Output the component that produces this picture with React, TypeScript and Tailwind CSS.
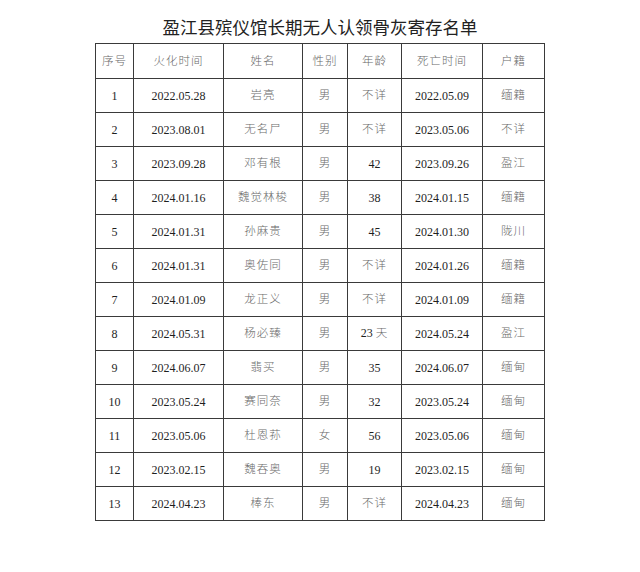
import React from 'react'

const COLUMNS = [
  { label: '序号', width: 'w-[38px]' },
  { label: '火化时间', width: 'w-[90px]' },
  { label: '姓名', width: 'w-[79px]' },
  { label: '性别', width: 'w-[45px]' },
  { label: '年龄', width: 'w-[54px]' },
  { label: '死亡时间', width: 'w-[81px]' },
  { label: '户籍', width: 'w-[62px]' },
]

const ROWS: string[][] = [
  ['1', '2022.05.28', '岩亮', '男', '不详', '2022.05.09', '缅籍'],
  ['2', '2023.08.01', '无名尸', '男', '不详', '2023.05.06', '不详'],
  ['3', '2023.09.28', '邓有根', '男', '42', '2023.09.26', '盈江'],
  ['4', '2024.01.16', '魏觉林梭', '男', '38', '2024.01.15', '缅籍'],
  ['5', '2024.01.31', '孙麻贵', '男', '45', '2024.01.30', '陇川'],
  ['6', '2024.01.31', '奥佐同', '男', '不详', '2024.01.26', '缅籍'],
  ['7', '2024.01.09', '龙正义', '男', '不详', '2024.01.09', '缅籍'],
  ['8', '2024.05.31', '杨必臻', '男', '23 天', '2024.05.24', '盈江'],
  ['9', '2024.06.07', '翡买', '男', '35', '2024.06.07', '缅甸'],
  ['10', '2023.05.24', '赛同奈', '男', '32', '2023.05.24', '缅甸'],
  ['11', '2023.05.06', '杜恩荪', '女', '56', '2023.05.06', '缅甸'],
  ['12', '2023.02.15', '魏吞奥', '男', '19', '2023.02.15', '缅甸'],
  ['13', '2024.04.23', '棒东', '男', '不详', '2024.04.23', '缅甸'],
]

// split text so CJK runs get the lighter ink the scan shows
function Ink({ text }: { text: string }) {
  const parts = text.match(/[\u4e00-\u9fff]+|[^\u4e00-\u9fff]+/g) || []
  return (
    <>
      {parts.map((p, i) =>
        /[\u4e00-\u9fff]/.test(p) ? (
          <span key={i} className="text-[#6a6a6a] font-light text-[11.5px] tracking-[1px]">
            {p}
          </span>
        ) : (
          <span key={i} className="text-[#1f1f1f]">
            {p}
          </span>
        )
      )}
    </>
  )
}

export default function App() {
  return (
    <div className="w-[640px] h-[572px] bg-white pt-[15px] font-['Liberation_Serif','Noto_Sans_CJK_SC',serif]">
      <h1 className="text-center text-[17.5px] leading-[24px] font-normal text-[#222] font-['Noto_Sans_CJK_SC',serif]">
        盈江县殡仪馆长期无人认领骨灰寄存名单
      </h1>

      <table className="mx-auto mt-[4px] border-collapse table-fixed w-[450px] text-[12px]">
        <colgroup>
          {COLUMNS.map((c) => (
            <col key={c.label} className={c.width} />
          ))}
        </colgroup>
        <thead>
          <tr>
            {COLUMNS.map((c) => (
              <th
                key={c.label}
                className="h-[35px] p-0 border border-[#3a3a3a] font-normal text-center align-middle"
              >
                <Ink text={c.label} />
              </th>
            ))}
          </tr>
        </thead>
        <tbody>
          {ROWS.map((row) => (
            <tr key={row[0]}>
              {row.map((cell, i) => (
                <td
                  key={i}
                  className="h-[34px] p-0 border border-[#3a3a3a] text-center align-middle"
                >
                  <Ink text={cell} />
                </td>
              ))}
            </tr>
          ))}
        </tbody>
      </table>
    </div>
  )
}
